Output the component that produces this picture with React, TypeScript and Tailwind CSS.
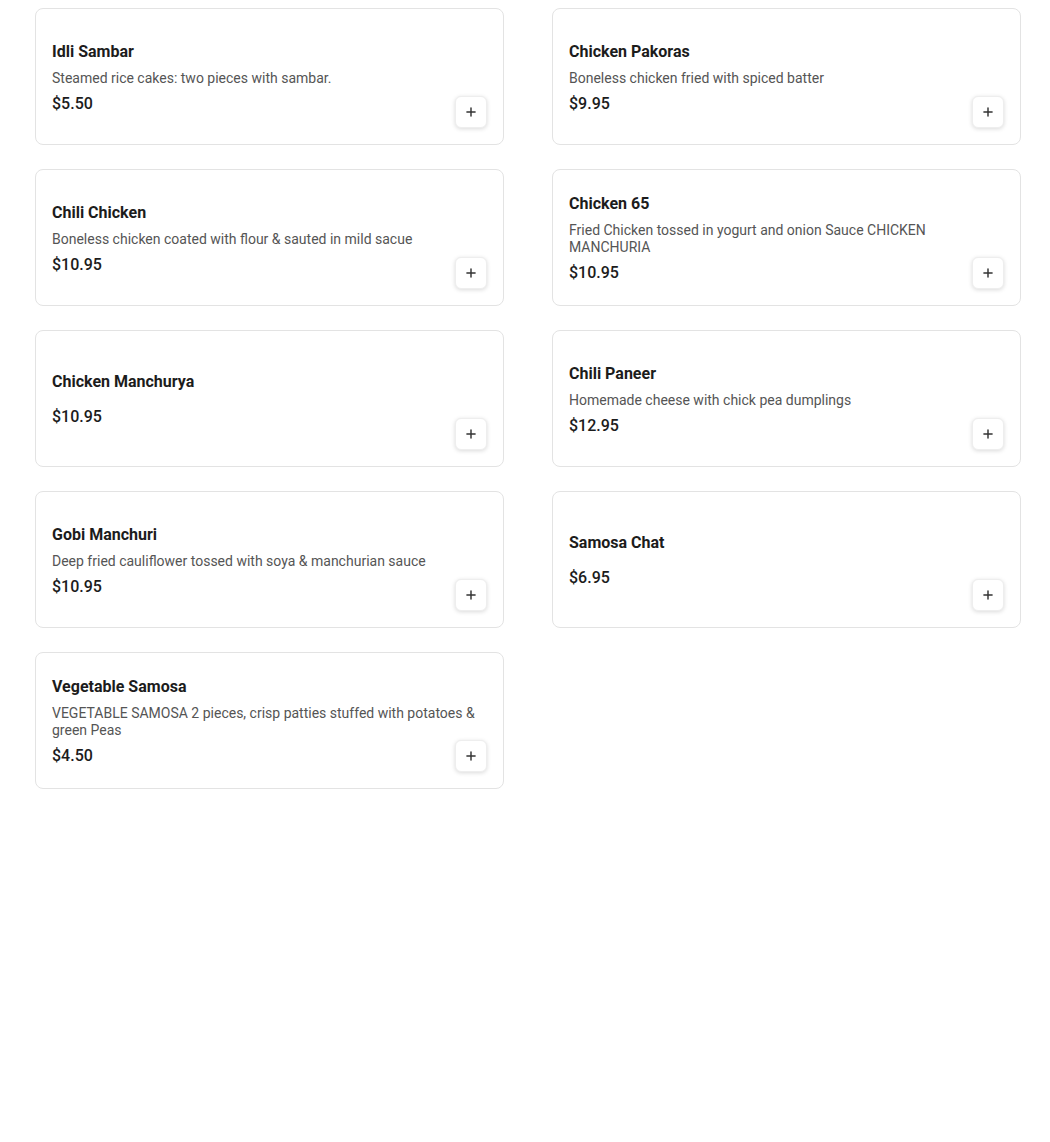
import { Plus } from "lucide-react";

const items = [
  { name: "Idli Sambar", desc: "Steamed rice cakes: two pieces with sambar.", price: "$5.50" },
  { name: "Chicken Pakoras", desc: "Boneless chicken fried with spiced batter", price: "$9.95" },
  { name: "Chili Chicken", desc: "Boneless chicken coated with flour & sauted in mild sacue", price: "$10.95" },
  { name: "Chicken 65", desc: "Fried Chicken tossed in yogurt and onion Sauce CHICKEN MANCHURIA", price: "$10.95" },
  { name: "Chicken Manchurya", desc: "", price: "$10.95" },
  { name: "Chili Paneer", desc: "Homemade cheese with chick pea dumplings", price: "$12.95" },
  { name: "Gobi Manchuri", desc: "Deep fried cauliflower tossed with soya & manchurian sauce", price: "$10.95" },
  { name: "Samosa Chat", desc: "", price: "$6.95" },
  {
    name: "Vegetable Samosa",
    desc: "VEGETABLE SAMOSA 2 pieces, crisp patties stuffed with potatoes & green Peas",
    price: "$4.50",
  },
];

function MenuCard({ name, desc, price }: { name: string; desc: string; price: string }) {
  return (
    <div className="relative h-[137px] rounded-lg border border-[#e3e3e3] bg-white px-4 flex items-center">
      <div className="flex flex-col pr-2 pt-[2px]">
        <h3 className="text-base leading-6 font-bold text-[#1c1c1c]">{name}</h3>
        <p className="mt-[6px] text-sm leading-[17px] text-[#555]">{desc}</p>
        <span className="mt-[5px] text-base leading-6 font-medium text-[#1c1c1c]">{price}</span>
      </div>
      {/* add button */}
      <button className="absolute right-4 bottom-4 w-8 h-8 rounded-md bg-white border border-[#eee] shadow-[0_1px_4px_rgba(0,0,0,0.15)] flex items-center justify-center">
        <Plus className="w-3.5 h-3.5 text-[#333]" strokeWidth={2.5} />
      </button>
    </div>
  );
}

export default function App() {
  return (
    <div className="min-h-[1142px] bg-white pt-2 pl-[35px] font-['Roboto',sans-serif]">
      <div className="grid grid-cols-[469px_469px] gap-x-[48px] gap-y-[24px]">
        {items.map((item) => (
          <MenuCard key={item.name} {...item} />
        ))}
      </div>
    </div>
  );
}
